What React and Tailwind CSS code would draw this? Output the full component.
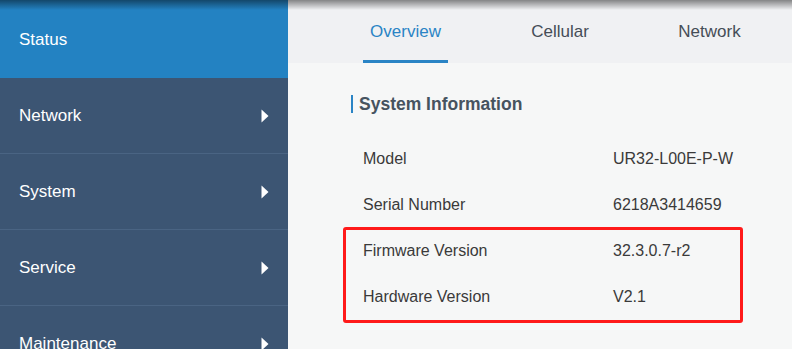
import React from "react";

const font = { fontFamily: '"Liberation Sans", Arial, sans-serif' };

function Arrow() {
  return (
    <svg width="8" height="14" viewBox="0 0 8 14" className="shrink-0">
      <path d="M0.5 0.5 L7.5 7 L0.5 13.5 Z" fill="#ffffff" />
    </svg>
  );
}

function NavItem({ label }) {
  return (
    <div className="h-[76px] flex items-center justify-between pl-[19px] pr-[19px] border-b border-[#4a6483] text-white text-[17px] shrink-0">
      <span>{label}</span>
      <Arrow />
    </div>
  );
}

function Row({ label, value }) {
  return (
    <div className="h-[46px] flex items-center text-[16px] text-[#3a3a3a]">
      <span className="w-[250px]">{label}</span>
      <span>{value}</span>
    </div>
  );
}

export default function App() {
  return (
    <div
      className="relative w-[792px] h-[349px] overflow-hidden flex bg-[#f6f7f7]"
      style={font}
    >
      <div className="w-[288px] shrink-0 flex flex-col bg-[#3c5573]">
        <div className="h-[78px] shrink-0 bg-[#2382c2] flex items-center pl-[19px] text-white text-[17px] pt-[2px]">
          Status
        </div>
        <NavItem label="Network" />
        <NavItem label="System" />
        <NavItem label="Service" />
        <NavItem label="Maintenance" />
      </div>
      <div className="flex-1 flex flex-col">
        <div className="h-[63px] shrink-0 bg-[#f0f1f3] flex items-stretch pl-[75px] text-[17px]">
          <div className="w-[85px] flex items-center justify-center text-[#2a84c5] border-b-[3px] border-[#2a84c5] pt-[4px]">
            Overview
          </div>
          <div className="w-[224px] flex items-center justify-center text-[#454d57] pt-[4px] pb-[3px]">
            Cellular
          </div>
          <div className="w-[75px] flex items-center justify-center text-[#454d57] pt-[4px] pb-[3px]">
            Network
          </div>
        </div>
        <div className="flex flex-col pl-[63px] pt-[32px]">
          <div className="flex items-center h-[18px]">
            <div className="w-[2px] h-[18px] bg-[#2a84c5] mr-[6px]" />
            <span className="text-[17.5px] font-bold text-[#46535f]">System Information</span>
          </div>
          <div className="flex flex-col pl-[12px] pt-[23px]">
            <Row label="Model" value="UR32-L00E-P-W" />
            <Row label="Serial Number" value="6218A3414659" />
            <div className="relative">
              <Row label="Firmware Version" value="32.3.0.7-r2" />
              <Row label="Hardware Version" value="V2.1" />
              <div className="absolute left-[-20px] top-[-1px] w-[400px] h-[96px] border-[3px] border-[#ff1a1a] rounded-[3px]" />
            </div>
          </div>
        </div>
      </div>
      <div className="absolute left-0 top-0 w-full h-[10px] bg-gradient-to-b from-[rgba(0,0,0,0.45)] to-transparent pointer-events-none" />
    </div>
  );
}
